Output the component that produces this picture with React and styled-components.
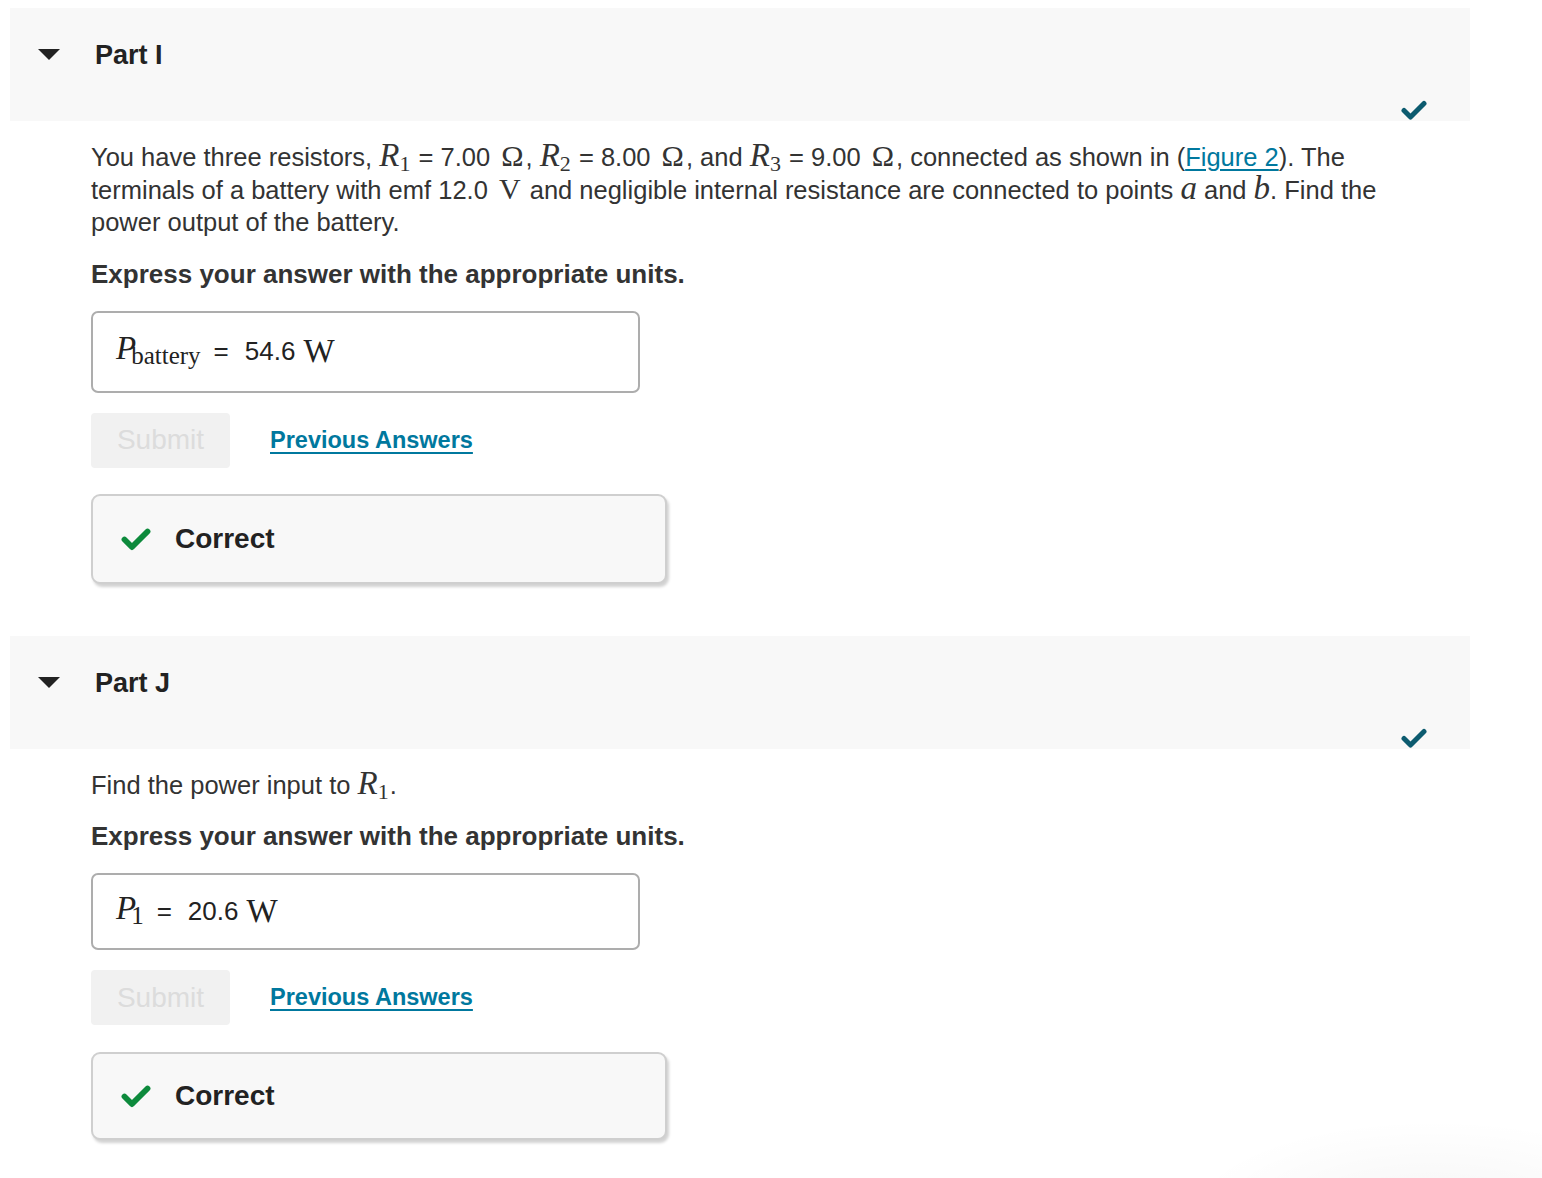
import React from 'react';
import styled, { createGlobalStyle } from 'styled-components';

const Global = createGlobalStyle`
  html, body {
    margin: 0;
    padding: 0;
    background: #ffffff;
  }
  body {
    font-family: "Liberation Sans", Arial, Helvetica, sans-serif;
    color: #333333;
  }
`;

const Page = styled.div`
  width: 1542px;
  min-height: 1178px;
  padding: 8px 0 0 10px;
  box-sizing: border-box;
  position: relative;
  overflow: hidden;
`;

const Part = styled.section`
  width: 1460px;
  margin-bottom: ${p => p.$last ? '0' : '52px'};
`;

const Header = styled.div`
  position: relative;
  height: 113px;
  background: #f8f8f8;
  display: flex;
  align-items: flex-start;
  padding: 32px 0 0 28px;
  box-sizing: border-box;
`;

const Caret = styled.span`
  width: 0;
  height: 0;
  border-left: 11px solid transparent;
  border-right: 11px solid transparent;
  border-top: 11px solid #222;
  margin-top: 9px;
`;

const Title = styled.h2`
  margin: 0 0 0 35px;
  font-size: 27px;
  line-height: 30px;
  font-weight: 700;
  color: #222;
`;

const DoneMark = styled.svg`
  position: absolute;
  right: 43px;
  bottom: 1px;
  width: 26px;
  height: 20px;
`;

const Body = styled.div`
  padding: 20px 0 0 81px;
`;

const Para = styled.p`
  margin: 0;
  width: 1340px;
  font-size: 25.5px;
  line-height: 32.5px;
  color: #333;
`;

const Instr = styled.p`
  margin: 20px 0 0;
  font-size: 26px;
  line-height: 30px;
  font-weight: 700;
  color: #333;
`;

const MathI = styled.span`
  font-family: "Liberation Serif", "Times New Roman", serif;
  font-style: italic;
  font-size: ${p => p.$size || 33}px;
  line-height: 0;
`;

const MathR = styled.span`
  font-family: "Liberation Serif", "Times New Roman", serif;
  font-size: ${p => p.$size || 30}px;
  line-height: 0;
  margin: 0 2px 0 4px;
`;

const Sub = styled.sub`
  font-family: "Liberation Serif", "Times New Roman", serif;
  font-style: normal;
  font-size: ${p => p.$size || 22}px;
  vertical-align: -5px;
  line-height: 0;
  margin-left: ${p => p.$shift ?? 0}px;
  margin-right: ${p => p.$after ?? 1}px;
`;

const Link = styled.a`
  color: #00789e;
  text-decoration: underline;
  text-underline-offset: 3px;
`;

const AnswerBox = styled.div`
  margin-top: 22px;
  width: 549px;
  height: ${p => p.$h}px;
  border: 2px solid #adadad;
  border-radius: 7px;
  box-sizing: border-box;
  display: flex;
  align-items: center;
  padding-left: 23px;
  font-size: 26px;
  color: #222;
`;

const Eq = styled.span`
  margin: 0 16px 0 10px;
`;

const Unit = styled.span`
  font-family: "Liberation Serif", "Times New Roman", serif;
  font-size: 33px;
  margin-left: 8px;
`;

const Actions = styled.div`
  margin-top: 20px;
  display: flex;
  align-items: center;
  gap: 40px;
`;

const SubmitBtn = styled.button`
  width: 139px;
  height: 55px;
  border: none;
  border-radius: 4px;
  background: #f1f1f1;
  color: #dcdcdc;
  font-family: "Liberation Sans", Arial, sans-serif;
  font-size: 28px;
  padding: 0;
`;

const PrevLink = styled.a`
  font-size: 23.5px;
  font-weight: 700;
  color: #00789e;
  text-decoration: underline;
  text-decoration-thickness: 2px;
  text-underline-offset: 4px;
`;

const Feedback = styled.div`
  margin-top: ${p => p.$top}px;
  width: 576px;
  height: ${p => p.$h}px;
  box-sizing: border-box;
  background: #f8f8f8;
  border: 2px solid #cfcfcf;
  border-radius: 9px;
  box-shadow: 2px 3px 3px rgba(0, 0, 0, 0.18);
  display: flex;
  align-items: center;
  padding-left: 28px;
  gap: 24px;
`;

const Verdict = styled.span`
  font-size: 28px;
  font-weight: 700;
  color: #222;
`;

const Glow = styled.div`
  position: absolute;
  right: -60px;
  bottom: -80px;
  width: 420px;
  height: 140px;
  background: radial-gradient(ellipse at 60% 70%, rgba(0,0,0,0.04), rgba(0,0,0,0) 70%);
  pointer-events: none;
`;

const Check = ({ color, w, h }) => (
  <svg width={w} height={h} viewBox="0 0 26 20">
    <path d="M3 10.5 L9.5 17 L23 3.5" fill="none" stroke={color} strokeWidth="5" strokeLinecap="round" strokeLinejoin="round" />
  </svg>
);

const R = ({ n }) => (
  <MathI>R<Sub>{n}</Sub></MathI>
);

const Ohm = () => <MathR>Ω</MathR>;

function PartBlock({ name, last, children, symbol, value, boxH, fbH, fbTop }) {
  return (
    <Part $last={last}>
      <Header>
        <Caret />
        <Title>{name}</Title>
        <DoneMark viewBox="0 0 26 20">
          <path d="M3 10.5 L9.5 17 L23 3.5" fill="none" stroke="#0c5b6f" strokeWidth="5" strokeLinecap="round" strokeLinejoin="round" />
        </DoneMark>
      </Header>
      <Body>
        {children}
        <Instr>Express your answer with the appropriate units.</Instr>
        <AnswerBox $h={boxH}>
          {symbol}
          <Eq>=</Eq>
          {value}
          <Unit>W</Unit>
        </AnswerBox>
        <Actions>
          <SubmitBtn disabled>Submit</SubmitBtn>
          <PrevLink href="#">Previous Answers</PrevLink>
        </Actions>
        <Feedback $h={fbH} $top={fbTop}>
          <Check color="#0d8a3c" w={30} h={24} />
          <Verdict>Correct</Verdict>
        </Feedback>
      </Body>
    </Part>
  );
}

export default function App() {
  return (
    <>
      <Global />
      <Page>
        <PartBlock
          name="Part I"
          boxH={82}
          fbH={90}
          fbTop={26}
          value="54.6"
          symbol={<MathI>P<Sub $size={25} $shift={-5} $after={3}>battery</Sub></MathI>}
        >
          <Para>
            You have three resistors, <R n="1" /> = 7.00 <Ohm />, <R n="2" /> = 8.00 <Ohm />, and <R n="3" /> = 9.00 <Ohm />, connected as shown in (<Link href="#">Figure 2</Link>). The terminals of a battery with emf 12.0 <MathR>V</MathR> and negligible internal resistance are connected to points <MathI>a</MathI> and <MathI>b</MathI>. Find the power output of the battery.
          </Para>
        </PartBlock>
        <PartBlock
          name="Part J"
          last
          boxH={77}
          fbH={88}
          fbTop={27}
          value="20.6"
          symbol={<MathI>P<Sub $size={25} $shift={-5} $after={3}>1</Sub></MathI>}
        >
          <Para>
            Find the power input to <R n="1" />.
          </Para>
        </PartBlock>
        <Glow />
      </Page>
    </>
  );
}
